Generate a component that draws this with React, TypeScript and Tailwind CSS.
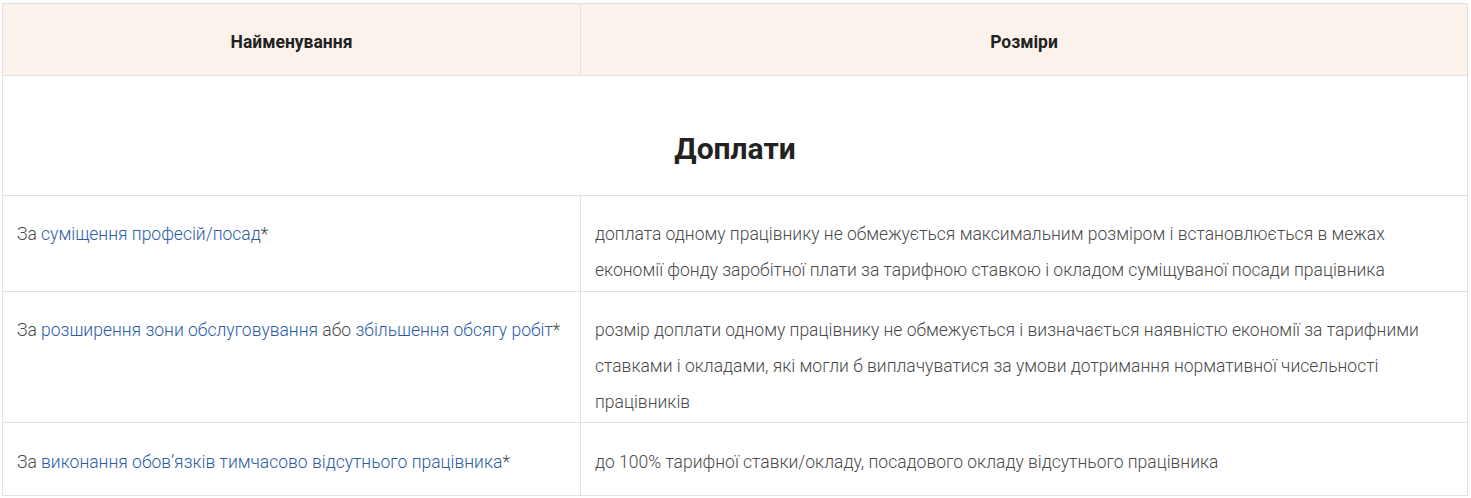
import React from "react";

const link = "text-[#2b5ca8]";
const cell = "border border-[#e2e2e2] align-top px-[14px] leading-[36px]";

export default function App() {
  return (
    <div className="bg-white pl-[2px] pr-[3px] pt-[3px]" style={{ fontFamily: "Roboto, 'Noto Sans', sans-serif" }}>
      <table className="w-full border-collapse table-fixed text-[17.5px] font-light text-[#4a4a4a]">
        <colgroup>
          <col className="w-[578px]" />
          <col />
        </colgroup>
        <thead>
          <tr className="h-[72px] bg-[#fbf2eb]">
            <th className="border border-[#e2e2e2] text-center align-middle pt-[6px] text-[17.5px] font-bold text-[#222222]">Найменування</th>
            <th className="border border-[#e2e2e2] text-center align-middle pt-[6px] text-[17.5px] font-bold text-[#222222]">Розміри</th>
          </tr>
        </thead>
        <tbody>
          <tr className="h-[120px]">
            <td colSpan={2} className="border border-[#e2e2e2] text-center align-middle pt-[26px] text-[30px] font-bold text-[#222222]">
              Доплати
            </td>
          </tr>
          <tr className="h-[96px]">
            <td className={`${cell} pt-[20px]`}>
              За <span className={link}>суміщення професій/посад</span>*
            </td>
            <td className={`${cell} pt-[20px]`}>
              доплата одному працівнику не обмежується максимальним розміром і встановлюється в межах економії фонду заробітної плати за тарифною ставкою і окладом суміщуваної посади працівника
            </td>
          </tr>
          <tr className="h-[131px]">
            <td className={`${cell} pt-[20px]`}>
              За <span className={link}>розширення зони обслуговування</span> або <span className={link}>збільшення обсягу робіт</span>*
            </td>
            <td className={`${cell} pt-[20px] pr-[30px]`}>
              розмір доплати одному працівнику не обмежується і визначається наявністю економії за тарифними ставками і окладами, які могли б виплачуватися за умови дотримання нормативної чисельності працівників
            </td>
          </tr>
          <tr className="h-[73px]">
            <td className={`${cell} pt-[21px]`}>
              За <span className={link}>виконання обов’язків тимчасово відсутнього працівника</span>*
            </td>
            <td className={`${cell} pt-[21px]`}>
              до 100% тарифної ставки/окладу, посадового окладу відсутнього працівника
            </td>
          </tr>
        </tbody>
      </table>
    </div>
  );
}
